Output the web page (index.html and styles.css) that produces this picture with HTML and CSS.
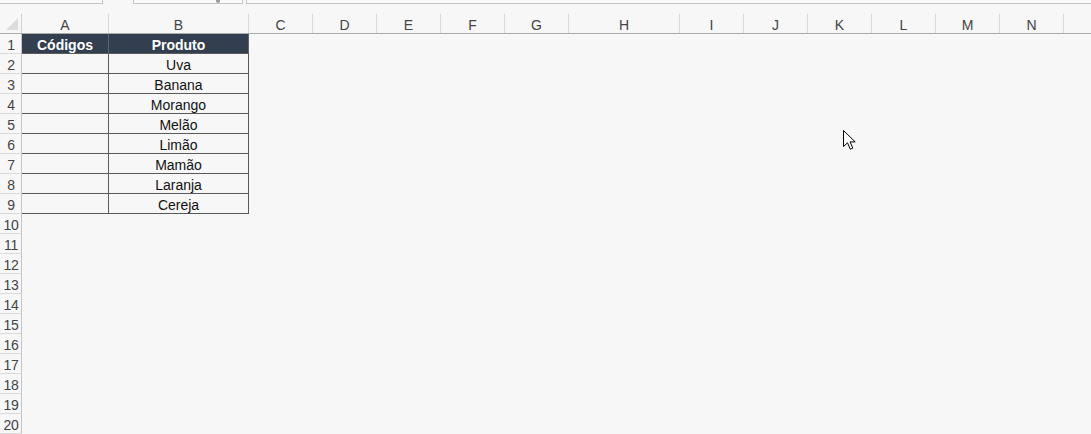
FILE: index.html
```html
<!DOCTYPE html>
<html lang="pt">
<head>
<meta charset="utf-8">
<link rel="stylesheet" href="styles.css">
</head>
<body>
<div class="topbar">
  <div class="box box-name"></div>
  <div class="box box-mid"><span class="glyph"></span></div>
  <div class="box box-formula"></div>
</div>
<div class="sheet">
  <div class="colhead">
    <div class="corner"><span class="tri"></span></div>
    <div class="ch w87">A</div>
    <div class="ch w140">B</div>
    <div class="ch">C</div>
    <div class="ch">D</div>
    <div class="ch">E</div>
    <div class="ch">F</div>
    <div class="ch">G</div>
    <div class="ch w111">H</div>
    <div class="ch">I</div>
    <div class="ch">J</div>
    <div class="ch">K</div>
    <div class="ch">L</div>
    <div class="ch">M</div>
    <div class="ch">N</div>
    <div class="ch fill"></div>
  </div>
  <div class="row"><div class="rh">1</div><div class="cell a t hd">Códigos</div><div class="cell b t hd">Produto</div></div>
  <div class="row"><div class="rh">2</div><div class="cell a t"></div><div class="cell b t">Uva</div></div>
  <div class="row"><div class="rh">3</div><div class="cell a t"></div><div class="cell b t">Banana</div></div>
  <div class="row"><div class="rh">4</div><div class="cell a t"></div><div class="cell b t">Morango</div></div>
  <div class="row"><div class="rh">5</div><div class="cell a t"></div><div class="cell b t">Melão</div></div>
  <div class="row"><div class="rh">6</div><div class="cell a t"></div><div class="cell b t">Limão</div></div>
  <div class="row"><div class="rh">7</div><div class="cell a t"></div><div class="cell b t">Mamão</div></div>
  <div class="row"><div class="rh">8</div><div class="cell a t"></div><div class="cell b t">Laranja</div></div>
  <div class="row"><div class="rh">9</div><div class="cell a t"></div><div class="cell b t">Cereja</div></div>
  <div class="row"><div class="rh">10</div></div>
  <div class="row"><div class="rh">11</div></div>
  <div class="row"><div class="rh">12</div></div>
  <div class="row"><div class="rh">13</div></div>
  <div class="row"><div class="rh">14</div></div>
  <div class="row"><div class="rh">15</div></div>
  <div class="row"><div class="rh">16</div></div>
  <div class="row"><div class="rh">17</div></div>
  <div class="row"><div class="rh">18</div></div>
  <div class="row"><div class="rh">19</div></div>
  <div class="row"><div class="rh">20</div></div>
</div>
<svg class="cursor" width="14" height="21" viewBox="0 0 14 21" aria-hidden="true">
  <path d="M0.5 0.5 L0.5 16.5 L4.5 12.8 L7.3 19.2 L9.8 18.1 L7.1 11.9 L12.2 11.9 Z" fill="#fff" stroke="#000" stroke-width="1" stroke-linejoin="miter"/>
</svg>
</body>
</html>
```

FILE: styles.css
```css
* { box-sizing: border-box; }
html, body { margin: 0; padding: 0; }
body {
  background: #f7f7f7;
  font-family: "Liberation Sans", Arial, sans-serif;
  font-size: 14px;
  color: #111;
  width: 1091px;
  height: 434px;
  overflow: hidden;
  position: relative;
}
.topbar {
  display: flex;
  height: 14px;
  align-items: flex-start;
}
.box {
  height: 4px;
  border-bottom: 1px solid #c6c6c6;
  background: #f9f9f9;
}
.box-name { width: 103px; border-right: 1px solid #c6c6c6; }
.box-mid {
  width: 110px;
  margin-left: 30px;
  border-left: 1px solid #c6c6c6;
  border-right: 1px solid #c6c6c6;
  position: relative;
}
.glyph {
  position: absolute;
  left: 82px;
  top: 0;
  width: 4px;
  height: 3px;
  border-radius: 0 0 2px 2px;
  background: #9a9a9a;
}
.box-formula { flex: 1; margin-left: 3px; border-left: 1px solid #c6c6c6; }

.sheet { display: flex; flex-direction: column; }
.colhead {
  display: flex;
  height: 20px;
  border-bottom: 1px solid #ababab;
}
.corner {
  width: 22px;
  border-right: 1px solid #d0d0d0;
  position: relative;
}
.tri {
  position: absolute;
  left: 6px;
  top: 4px;
  width: 0;
  height: 0;
  border-left: 12px solid transparent;
  border-bottom: 12px solid #dcdcdc;
}
.ch {
  width: 64px;
  flex: none;
  border-right: 1px solid #dadada;
  text-align: center;
  padding-top: 2px;
  line-height: 19px;
  overflow: hidden;
  color: #444;
}
.w87 { width: 87px; }
.w140 { width: 140px; }
.w111 { width: 111px; }
.fill { flex: 1; border-right: none; }

.row {
  display: flex;
  height: 20px;
}
.rh {
  width: 22px;
  flex: none;
  border-right: 1px solid #c4c4c4;
  border-bottom: 1px solid #dadada;
  text-align: center;
  padding-top: 2px;
  line-height: 19px;
  overflow: hidden;
  color: #444;
  padding-left: 1px;
  letter-spacing: -0.3px;
}
.cell {
  flex: none;
  height: 20px;
  text-align: center;
  padding-top: 2px;
  line-height: 19px;
  overflow: hidden;
}
.a { width: 87px; }
.b { width: 140px; }
.t {
  border-right: 1px solid #5a5a5a;
  border-bottom: 1px solid #5a5a5a;
  color: #111;
}
.hd {
  background: #333f4f;
  color: #fff;
  font-weight: bold;
  border-right-color: #5d6470;
}
.cursor {
  position: absolute;
  left: 843px;
  top: 130px;
}
```
